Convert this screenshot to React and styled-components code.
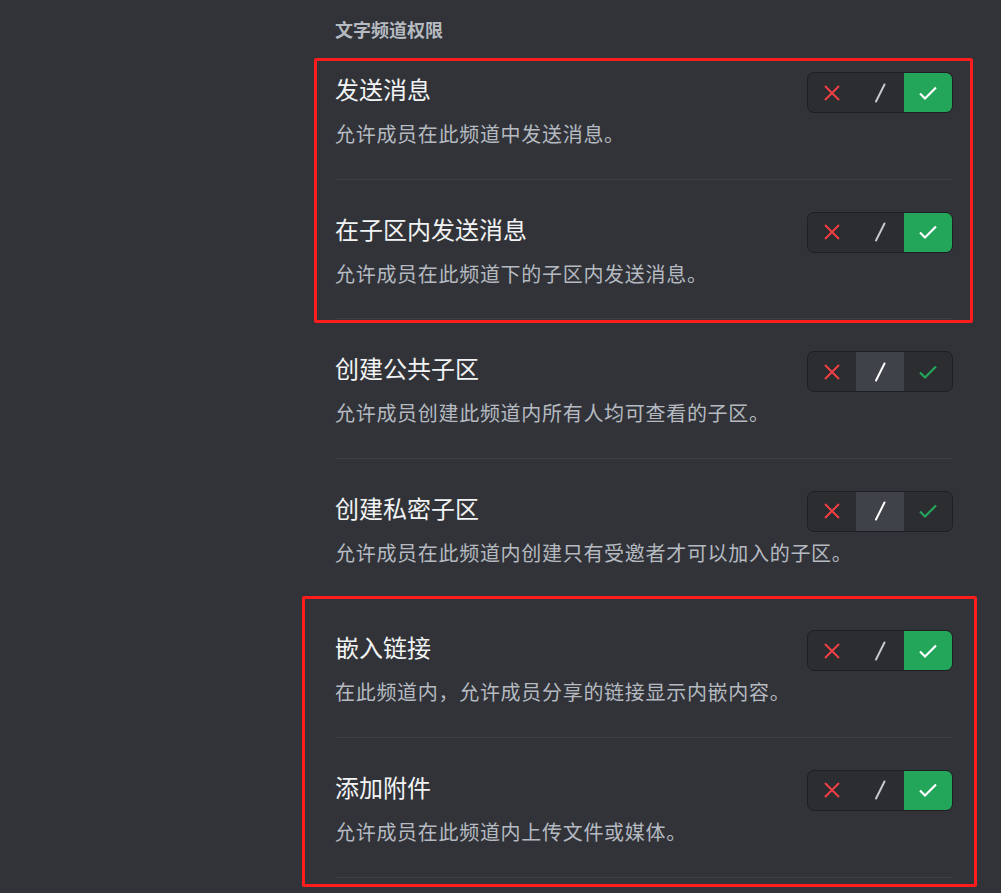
import React from 'react';
import styled, { createGlobalStyle } from 'styled-components';

const GlobalStyle = createGlobalStyle`
  html, body {
    margin: 0;
    padding: 0;
    background: #313338;
  }
  body {
    font-family: "Noto Sans CJK SC", "Noto Sans", sans-serif;
  }
`;

const Page = styled.div`
  position: relative;
  width: 1001px;
  height: 893px;
  overflow: hidden;
  background: #313338;
`;

const Column = styled.section`
  width: 618px;
  margin-left: 335px;
  padding-top: 18px;
`;

const SectionHeader = styled.h2`
  margin: 0;
  font-size: 18px;
  line-height: 22px;
  font-weight: 700;
  color: #b5bac1;
`;

const Row = styled.div`
  display: flex;
  align-items: flex-start;
  justify-content: space-between;
  gap: 16px;
  padding: 34px 0 31.6px;
  border-bottom: 1px solid #3f4147;
`;

const Texts = styled.div`
  flex: 1;
  min-width: 0;
  display: flex;
  flex-direction: column;
  gap: 17px;
`;

const Title = styled.div`
  font-size: 24px;
  line-height: 30px;
  color: #f2f3f5;
  white-space: nowrap;
`;

const Description = styled.div`
  font-size: 20px;
  line-height: 26px;
  letter-spacing: 0.7px;
  color: #b5bac1;
  white-space: nowrap;
`;

const Toggle = styled.div`
  flex-shrink: 0;
  display: flex;
  margin-top: -2px;
  width: 146px;
  height: 41px;
  box-sizing: border-box;
  border: 1px solid #1e1f22;
  border-radius: 7px;
  background: #2b2d31;
  overflow: hidden;
`;

const Segment = styled.div`
  flex: 1;
  display: flex;
  align-items: center;
  justify-content: center;
  background: ${p => p.$bg || 'transparent'};
`;

const Highlight = styled.div`
  position: absolute;
  left: ${p => p.$left}px;
  top: ${p => p.$top}px;
  width: ${p => p.$width}px;
  height: ${p => p.$height}px;
  box-sizing: border-box;
  border: 3px solid #ff1c1c;
  border-radius: 2px;
  pointer-events: none;
`;

const Deny = () => (
  <svg width="18" height="18" viewBox="0 0 18 18">
    <path d="M2 2 L16 16 M16 2 L2 16" stroke="#f23f43" strokeWidth="2" fill="none" />
  </svg>
);

const Neutral = ({ color }) => (
  <svg width="14" height="20" viewBox="0 0 14 20">
    <path d="M11.5 1.5 L3 18.5" stroke={color} strokeWidth="2" strokeLinecap="round" fill="none" />
  </svg>
);

const Allow = ({ color }) => (
  <svg width="20" height="16" viewBox="0 0 20 16">
    <path d="M2 8.5 L7 13.5 L18 2.5" stroke={color} strokeWidth="2.2" fill="none" />
  </svg>
);

const PermissionToggle = ({ allowed }) => (
  <Toggle>
    <Segment><Deny /></Segment>
    <Segment $bg={allowed ? null : '#404249'}>
      <Neutral color={allowed ? '#c4c9ce' : '#ffffff'} />
    </Segment>
    <Segment $bg={allowed ? '#23a55a' : null}>
      <Allow color={allowed ? '#ffffff' : '#23a55a'} />
    </Segment>
  </Toggle>
);

const permissions = [
  { title: '发送消息', desc: '允许成员在此频道中发送消息。', allowed: true },
  { title: '在子区内发送消息', desc: '允许成员在此频道下的子区内发送消息。', allowed: true },
  { title: '创建公共子区', desc: '允许成员创建此频道内所有人均可查看的子区。', allowed: false },
  { title: '创建私密子区', desc: '允许成员在此频道内创建只有受邀者才可以加入的子区。', allowed: false },
  { title: '嵌入链接', desc: '在此频道内，允许成员分享的链接显示内嵌内容。', allowed: true },
  { title: '添加附件', desc: '允许成员在此频道内上传文件或媒体。', allowed: true },
];

export default function App() {
  return (
    <Page>
      <GlobalStyle />
      <Column>
        <SectionHeader>文字频道权限</SectionHeader>
        {permissions.map(p => (
          <Row key={p.title}>
            <Texts>
              <Title>{p.title}</Title>
              <Description>{p.desc}</Description>
            </Texts>
            <PermissionToggle allowed={p.allowed} />
          </Row>
        ))}
      </Column>
      <Highlight $left={314} $top={58} $width={659} $height={265} />
      <Highlight $left={302} $top={596} $width={675} $height={291} />
    </Page>
  );
}
